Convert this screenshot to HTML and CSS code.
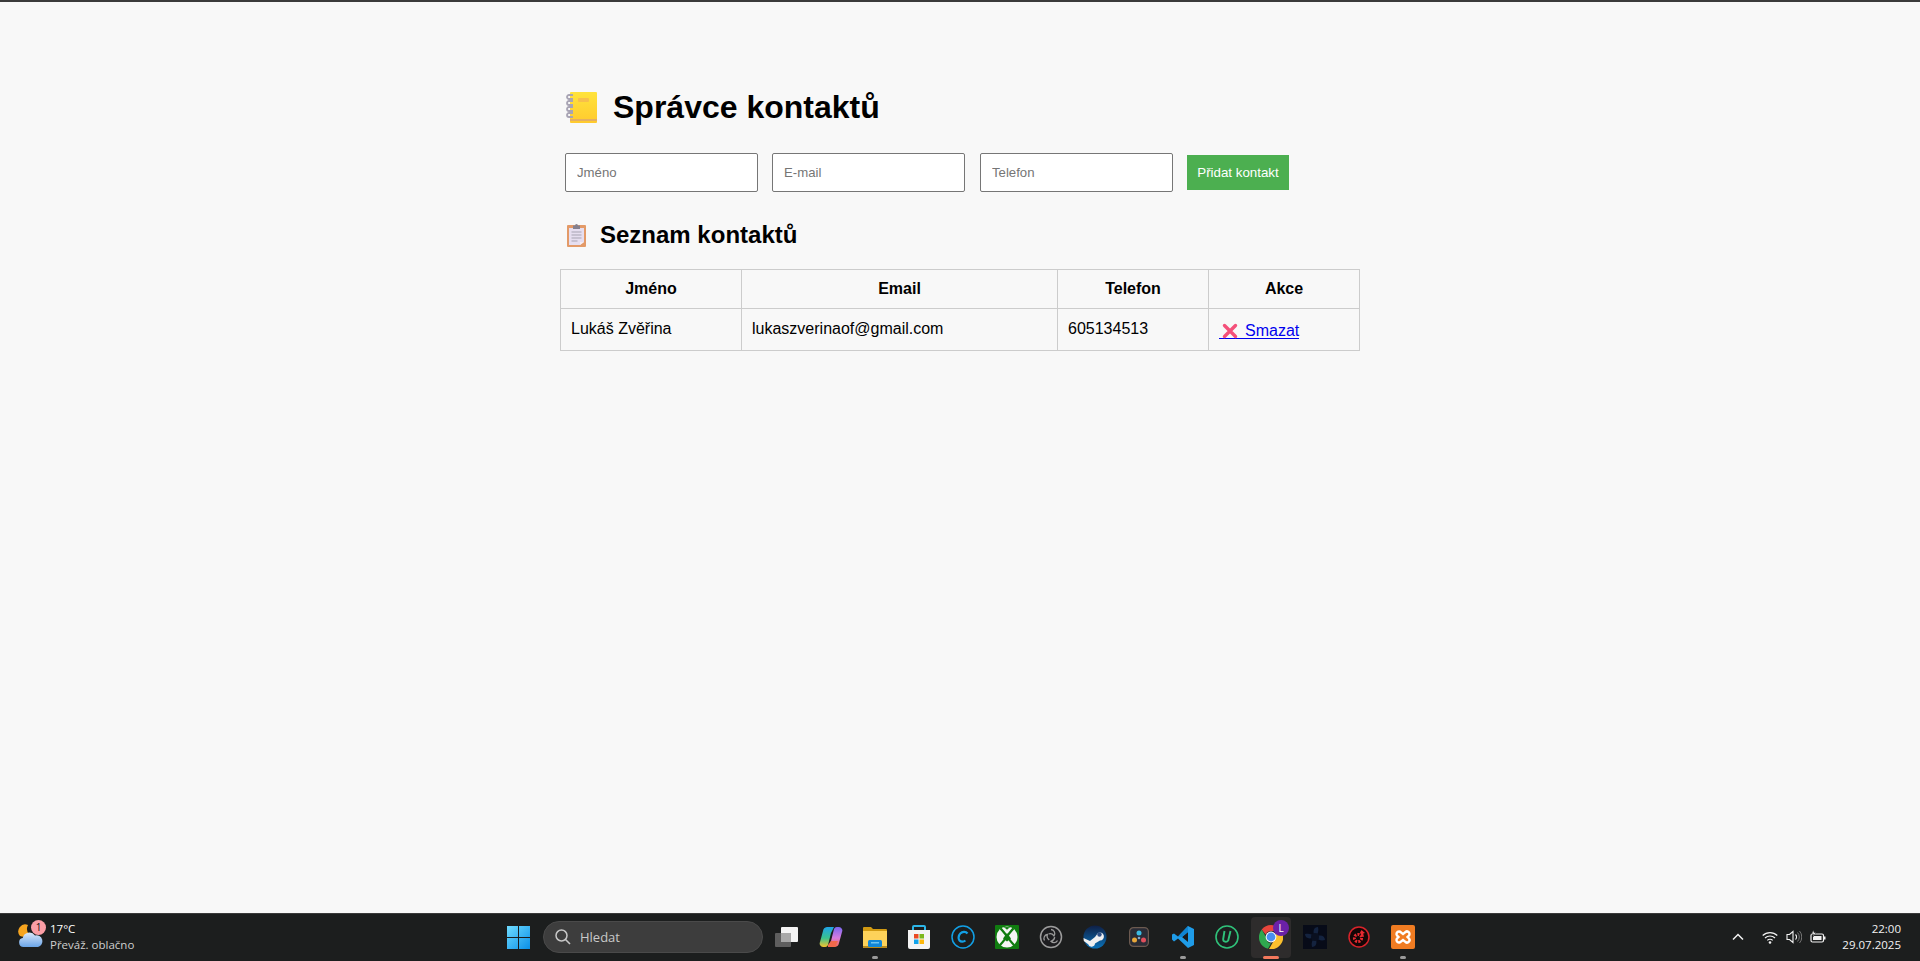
FILE: index.html
```html
<!DOCTYPE html>
<html lang="cs">
<head>
<meta charset="utf-8">
<title>Správce kontaktů</title>
<link rel="stylesheet" href="styles.css">
</head>
<body>
<div class="page">
  <main class="content">
    <h1 class="title">
      <svg class="emoji-book" viewBox="0 0 31 32" aria-hidden="true">
        <defs><linearGradient id="bookg" x1="0" y1="0" x2="0" y2="1"><stop offset="0" stop-color="#ffe33c"/><stop offset="1" stop-color="#ffca2e"/></linearGradient></defs>
        <rect x="4" y="0" width="27" height="31" rx="1" fill="url(#bookg)"/>
        <rect x="4" y="27" width="27" height="2" fill="#e4ae62"/>
        <rect x="12" y="6" width="11" height="4" rx="1" fill="#f7bf4c"/>
        <g fill="none" stroke="#a8a4b4" stroke-width="1.8"><path d="M7 3H3a2 2 0 0 0 0 4h4"/><path d="M7 9H3a2 2 0 0 0 0 4h4"/><path d="M7 15H3a2 2 0 0 0 0 4h4"/><path d="M7 21H3a2 2 0 0 0 0 4h4"/></g>
      </svg>
      <span>Správce kontaktů</span>
    </h1>
    <form class="add-form">
      <input class="field" type="text" placeholder="Jméno">
      <input class="field" type="text" placeholder="E-mail">
      <input class="field" type="text" placeholder="Telefon">
      <button class="add-btn" type="button">Přidat kontakt</button>
    </form>
    <h2 class="subtitle">
      <svg class="emoji-clip" viewBox="0 0 19 23" aria-hidden="true">
        <rect x="0" y="1" width="19" height="22" rx="1" fill="#e39a68"/>
        <path d="M2 4h15v14l-4 3H2z" fill="#e6def0"/>
        <path d="M13 21l4-3h-4z" fill="#f6eef4"/>
        <path d="M6 1.5h2a1.5 1.5 0 0 1 3 0h2V5H6z" fill="#85808e"/>
        <path d="M4.500 8h10M4.500 11h10M4.500 14h10M4.500 17h6" stroke="#a7a3b2" stroke-width="1"/>
      </svg>
      <span>Seznam kontaktů</span>
    </h2>
    <table class="contacts">
      <colgroup><col class="c1"><col class="c2"><col class="c3"><col class="c4"></colgroup>
      <thead>
        <tr><th>Jméno</th><th>Email</th><th>Telefon</th><th>Akce</th></tr>
      </thead>
      <tbody>
        <tr>
          <td>Lukáš Zvěřina</td>
          <td>lukaszverinaof@gmail.com</td>
          <td>605134513</td>
          <td class="action"><a class="del" href="#"><svg class="emoji-x" viewBox="0 0 16 16" aria-hidden="true"><path d="M2.500 2.500l11 11M13.500 2.500l-11 11" stroke="#f4507a" stroke-width="3.400" stroke-linecap="round"/></svg>Smazat</a></td>
        </tr>
      </tbody>
    </table>
  </main>

  <footer class="taskbar">
    <div class="tb-left">
      <div class="weather-icon">
        <svg viewBox="0 0 28 30" width="28" height="30" aria-hidden="true">
          <defs><linearGradient id="cloudg" x1="0" y1="0" x2="0" y2="1"><stop offset="0" stop-color="#dbe8fa"/><stop offset="1" stop-color="#6aa5e8"/></linearGradient></defs>
          <path d="M11 3a7 7 0 0 0-8 11 8 8 0 0 0 9-2 8 8 0 0 1-1-9z" fill="#f7a51f"/>
          <path d="M6.500 25a4.500 4.500 0 0 1-.8-8.900A6.800 6.800 0 0 1 18 13.500a5.800 5.800 0 0 1 3 11.500z" fill="url(#cloudg)"/>
        </svg>
        <span class="badge">1</span>
      </div>
      <div class="weather-text">
        <span class="temp">17°C</span>
        <span class="cond">Převáž. oblačno</span>
      </div>
    </div>

    <div class="tb-center">
      <div class="tb-start">
        <svg viewBox="0 0 23 23" width="23" height="23" aria-hidden="true">
          <defs><linearGradient id="wing" x1="0" y1="0" x2="1" y2="1"><stop offset="0" stop-color="#6fdcff"/><stop offset="1" stop-color="#0a8fe8"/></linearGradient></defs>
          <path d="M0 0h11v11H0zM12 0h11v11H12zM0 12h11v11H0zM12 12h11v11H12z" fill="url(#wing)"/>
        </svg>
      </div>
      <div class="tb-search">
        <svg viewBox="0 0 16 16" width="16" height="16" aria-hidden="true"><circle cx="6.500" cy="6.500" r="5.500" fill="none" stroke="#c8c8c8" stroke-width="1.500"/><path d="M10.500 10.500l4.500 4.500" stroke="#c8c8c8" stroke-width="1.600"/></svg>
        <span>Hledat</span>
      </div>
      <div class="tb-icon">
        <svg viewBox="0 0 24 24" width="24" height="24" aria-hidden="true"><rect x="0" y="8" width="16" height="14" rx="1" fill="#5e5e5e"/><rect x="6" y="2" width="17" height="15" rx="1" fill="#f4f4f4"/><rect x="6" y="8" width="10" height="9" fill="#a8a8a8"/></svg>
      </div>
      <div class="tb-icon">
        <svg viewBox="0 0 24 24" width="24" height="24" aria-hidden="true">
          <defs><linearGradient id="cop1" x1="0" y1="0" x2="0" y2="1"><stop offset="0" stop-color="#1fa4e8"/><stop offset=".55" stop-color="#39c28f"/><stop offset="1" stop-color="#f5c22c"/></linearGradient><linearGradient id="cop2" x1="0" y1="0" x2="0" y2="1"><stop offset="0" stop-color="#7a68f0"/><stop offset=".55" stop-color="#d77ce0"/><stop offset="1" stop-color="#f3684c"/></linearGradient></defs>
          <path d="M8 2h7l-3 6-3 12a3 3 0 0 1-3 2H4a3.500 3.500 0 0 1-3-5l3-11a4.500 4.500 0 0 1 4-4z" fill="url(#cop1)"/>
          <path d="M16 22H9l3-6 3-12a3 3 0 0 1 3-2h2a3.500 3.500 0 0 1 3 5l-3 11a4.500 4.500 0 0 1-4 4z" fill="url(#cop2)"/>
          <path d="M9 20l3-4h7l-3 6H9z" fill="#f0694a"/>
        </svg>
      </div>
      <div class="tb-icon open">
        <svg viewBox="0 0 24 22" width="24" height="22" aria-hidden="true"><path d="M0 2a1 1 0 0 1 1-1h7l2 2h13a1 1 0 0 1 1 1v4H0z" fill="#d19a12"/><path d="M0 5h24v16a1 1 0 0 1-1 1H1a1 1 0 0 1-1-1z" fill="#fdd25a"/><path d="M0 20h24v1a1 1 0 0 1-1 1H1a1 1 0 0 1-1-1z" fill="#b98a1a"/><rect x="5" y="14" width="14" height="7" rx="1.500" fill="#1187d8"/><rect x="8" y="16" width="8" height="1.500" fill="#6cc4f2"/></svg>
      </div>
      <div class="tb-icon">
        <svg viewBox="0 0 24 26" width="24" height="26" aria-hidden="true"><path d="M6 7V3a1 1 0 0 1 1-1h10a1 1 0 0 1 1 1v4" fill="none" stroke="#2cb6e8" stroke-width="2"/><path d="M1 6h22v17a2 2 0 0 1-2 2H3a2 2 0 0 1-2-2z" fill="#f4f4f4"/><rect x="7" y="10" width="4.500" height="4.500" fill="#ea4a24"/><rect x="12.500" y="10" width="4.500" height="4.500" fill="#7cb81c"/><rect x="7" y="15.500" width="4.500" height="4.500" fill="#12a4ec"/><rect x="12.500" y="15.500" width="4.500" height="4.500" fill="#fdb80c"/></svg>
      </div>
      <div class="tb-icon">
        <svg viewBox="0 0 24 24" width="24" height="24" aria-hidden="true"><circle cx="12" cy="12" r="11" fill="none" stroke="#12a0e6" stroke-width="1.500"/><path d="M16.500 8.500c-1-1.300-2.300-1.800-3.600-1.700-2.800.2-5 2.700-5.300 5.500-.3 2.600 1.400 4.500 3.800 4.400 1.100 0 2.100-.4 3-1.200" fill="none" stroke="#12a0e6" stroke-width="2.200"/></svg>
      </div>
      <div class="tb-icon">
        <svg viewBox="0 0 24 24" width="24" height="24" aria-hidden="true"><rect width="24" height="24" rx="1" fill="#107c10"/><circle cx="12" cy="12" r="10.500" fill="#f5f5f5"/><path d="M5.500 3.500C9 6 15 17 19.500 20.500M18.500 3.500C15 6 9 17 4.500 20.500" fill="none" stroke="#107c10" stroke-width="2.200"/><path d="M12 8l4 5.500-4 3-4-3z" fill="#107c10"/><path d="M8 2.500q4 1 4 3 0-2 4-3-4-1-8 0z" fill="#107c10"/></svg>
      </div>
      <div class="tb-icon">
        <svg viewBox="0 0 24 24" width="24" height="24" aria-hidden="true"><circle cx="12" cy="12" r="10.500" fill="#1d1d20" stroke="#9c9c9c" stroke-width="1.500"/><g fill="none" stroke="#9a9a9a" stroke-width="1.300"><path d="M12 4.500a4 4 0 0 1 3 6.300 5 5 0 0 0-5.500-1.800"/><path d="M18.500 15.500a4 4 0 0 1-6.500.8 5 5 0 0 0 3.700-4.200"/><path d="M5.500 15.500a4 4 0 0 1 2.800-6 5 5 0 0 0 2 5.400"/></g></svg>
      </div>
      <div class="tb-icon">
        <svg viewBox="0 0 24 24" width="24" height="24" aria-hidden="true"><defs><linearGradient id="steamg" x1="0" y1="0" x2="0" y2="1"><stop offset="0" stop-color="#0f1f45"/><stop offset="1" stop-color="#0a72b8"/></linearGradient></defs><circle cx="12" cy="12" r="11.500" fill="url(#steamg)"/><path d="M.5 13l6.500 3 5-4 3-4a4 4 0 1 1 2 7.500l-5 3a3.500 3.500 0 0 1-6.800.8L.8 16z" fill="#f0f0f0"/><circle cx="16.500" cy="9.500" r="2.200" fill="#2d4f86"/></svg>
      </div>
      <div class="tb-icon">
        <svg viewBox="0 0 20 20" width="20" height="20" aria-hidden="true"><rect x=".6" y=".6" width="18.800" height="18.800" rx="4" fill="#2a2c36" stroke="#6c5a50" stroke-width="1.200"/><circle cx="10" cy="6" r="2.500" fill="#3cbbe4"/><circle cx="5.500" cy="13" r="2.500" fill="#e8a73a"/><circle cx="14.500" cy="13" r="2.500" fill="#e04f5c"/><circle cx="10" cy="11" r="1.300" fill="#7ca8d0"/></svg>
      </div>
      <div class="tb-icon open">
        <svg viewBox="0 0 24 24" width="24" height="24" aria-hidden="true"><path d="M17 1l6 3v16l-6 3-10-9.500-4 3L1 14.500V9.500l2-1 4 3z" fill="#1f9ce8"/><path d="M17 7v10l-6-5z" fill="#1a1a1a"/><path d="M17 1v6l-6 5-4-.500z" fill="#0f84d2"/></svg>
      </div>
      <div class="tb-icon">
        <svg viewBox="0 0 24 24" width="24" height="24" aria-hidden="true"><circle cx="12" cy="12" r="11" fill="none" stroke="#2fc27a" stroke-width="1.600"/><path d="M9.500 6l-1.300 8c-.4 3 3.500 3.600 5 1.500L15.500 6" fill="none" stroke="#2fc27a" stroke-width="1.900"/></svg>
      </div>
      <div class="tb-icon active">
        <span class="active-bg"></span>
        <svg viewBox="0 0 24 24" width="24" height="24" aria-hidden="true"><path d="M12 0a12 12 0 0 1 10.400 6H12a6 6 0 0 0-5.500 3.600L2.700 4.500A12 12 0 0 1 12 0z" fill="#e8453c"/><path d="M2.700 4.500l5 8.800a5 5 0 0 0 4.300 5l-3 5.500A12 12 0 0 1 2.700 4.500z" fill="#2fa84f"/><path d="M22.400 6A12 12 0 0 1 10 24l5-8.500a6 6 0 0 0 1.500-6.500z" fill="#fbc02d"/><circle cx="12" cy="12" r="5.400" fill="#fff"/><circle cx="12" cy="12" r="4.400" fill="#4a8ff0"/></svg>
        <span class="profile">L</span>
      </div>
      <div class="tb-icon">
        <svg viewBox="0 0 24 24" width="24" height="24" aria-hidden="true"><rect width="24" height="24" fill="#070b18"/><g fill="#14233f"><path d="M12 12C9 6 11 2 15 2c1 4 0 7-3 10zM12 12c6-3 10-1 10 3-4 1-7 0-10-3zM12 12c3 6 1 10-3 10-1-4 0-7 3-10zM12 12C6 15 2 13 2 9c4-1 7 0 10 3z"/></g><circle cx="12" cy="12" r="4" fill="#0a1020"/></svg>
      </div>
      <div class="tb-icon">
        <svg viewBox="0 0 22 22" width="22" height="22" aria-hidden="true"><circle cx="11" cy="11" r="10" fill="#140606" stroke="#d8232a" stroke-width="1.500"/><circle cx="10" cy="12" r="3.600" fill="none" stroke="#e62a30" stroke-width="3" stroke-dasharray="2 1.200"/><path d="M13.500 4l3.500 3-1.800.5.800 3.500-2.500-1-1.500-3.500z" fill="#e62a30"/></svg>
      </div>
      <div class="tb-icon open">
        <svg viewBox="0 0 24 24" width="24" height="24" aria-hidden="true"><rect width="24" height="24" rx="2" fill="#f07c22"/><path d="M8 6.500a2.500 2.500 0 0 0-2 4l1.500 1.500L6 13.500a2.500 2.500 0 1 0 4 3L12 15l2 1.500a2.500 2.500 0 1 0 4-3L16.500 12l1.500-1.500a2.500 2.500 0 1 0-4-3L12 9l-2-1.500a2.500 2.500 0 0 0-2-1z" fill="none" stroke="#fff" stroke-width="2.400"/></svg>
      </div>
    </div>

    <div class="tb-right">
      <svg class="tray chev" viewBox="0 0 12 8" width="12" height="8" aria-hidden="true"><path d="M1 6.500l5-5 5 5" fill="none" stroke="#f2f2f2" stroke-width="1.500"/></svg>
      <svg class="tray" viewBox="0 0 16 13" width="16" height="13" aria-hidden="true"><g fill="none" stroke="#f2f2f2" stroke-width="1.200"><path d="M.7 4.500a10.500 10.500 0 0 1 14.600 0"/><path d="M3 7a7.200 7.200 0 0 1 10 0"/><path d="M5.300 9.400a3.800 3.800 0 0 1 5.400 0"/></g><circle cx="8" cy="11.500" r="1.300" fill="#f2f2f2"/></svg>
      <svg class="tray" viewBox="0 0 16 14" width="16" height="14" aria-hidden="true"><path d="M1 4.500h2.500L7 1.500v11l-3.500-3H1z" fill="none" stroke="#f2f2f2" stroke-width="1.100"/><path d="M9.500 4.500a3.500 3.500 0 0 1 0 5" fill="none" stroke="#f2f2f2" stroke-width="1.100"/><path d="M11.500 2.500a6.500 6.500 0 0 1 0 9M13.500 1a9 9 0 0 1 0 12" fill="none" stroke="#777" stroke-width="1"/></svg>
      <svg class="tray batt" viewBox="0 0 16 14" width="16" height="14" aria-hidden="true"><rect x="1" y="4" width="12.500" height="8" rx="1.500" fill="none" stroke="#f2f2f2" stroke-width="1.200"/><rect x="3" y="6" width="8.500" height="4" fill="#f2f2f2"/><rect x="14" y="6.500" width="1.500" height="3" fill="#f2f2f2"/><path d="M3.500 0L1.500 4h2L3 7l3-4.500H4z" fill="#f2f2f2" stroke="#1c1c1c" stroke-width=".5"/></svg>
      <div class="clock"><span>22:00</span><span>29.07.2025</span></div>
    </div>
  </footer>
</div>
</body>
</html>
```

FILE: styles.css
```css
* { box-sizing: border-box; }
html, body { margin: 0; height: 100%; }
body {
  background: #f8f8f8;
  color: #000;
  font-family: "Liberation Sans", Arial, sans-serif;
  overflow: hidden;
}
.page {
  height: 961px;
  display: flex;
  flex-direction: column;
  border-top: 2px solid #3b3b3b;
}
.content {
  flex: 1;
  width: 800px;
  margin: 0 auto;
}
.title {
  display: flex;
  align-items: center;
  margin: 87px 0 0 6px;
  height: 37px;
  font-size: 32px;
  line-height: 37px;
  font-weight: bold;
}
.emoji-book { width: 31px; height: 32px; margin-right: 16px; flex: none; }
.add-form {
  display: flex;
  align-items: center;
  margin: 27px 0 0 5px;
}
.field {
  width: 193px;
  height: 39px;
  padding: 11px;
  margin-right: 14px;
  background: #fff;
  border: 1px solid #767676;
  border-radius: 2px;
  font: 13.2px "Liberation Sans", Arial, sans-serif;
}
.field::placeholder { color: #757575; }
.add-form .field:nth-child(2) { margin-right: 15px; }
.add-btn {
  width: 102px;
  height: 35px;
  padding: 0;
  border: 0;
  background: #4caf50;
  color: #fff;
  font: 13.333px "Liberation Sans", Arial, sans-serif;
}
.subtitle {
  display: flex;
  align-items: center;
  margin: 29px 0 0 7px;
  height: 28px;
  font-size: 24px;
  line-height: 28px;
  font-weight: bold;
}
.emoji-clip { width: 19px; height: 23px; margin-right: 14px; flex: none; }
.contacts {
  width: 800px;
  margin-top: 20px;
  border-collapse: collapse;
  table-layout: fixed;
  font-size: 16px;
}
.c1 { width: 181px; }
.c2 { width: 316px; }
.c3 { width: 151px; }
.c4 { width: 151px; }
.contacts th, .contacts td {
  border: 1px solid #ccc;
  padding: 10px;
  line-height: 18px;
}
.contacts td { height: 42px; vertical-align: top; padding-top: 11px; padding-bottom: 9px; }
.contacts td.action { padding-top: 14px; padding-bottom: 0; }
.del {
  display: flex;
  width: fit-content;
  height: 16px;
  line-height: 16px;
  color: #0000ee;
  text-decoration: none;
  border-bottom: 1px solid #0000ee;
  white-space: nowrap;
}
.emoji-x { width: 16px; height: 16px; margin: 0 7px 0 3px; flex: none; }

.taskbar {
  height: 48px;
  flex: none;
  display: grid;
  grid-template-columns: 496px auto 1fr;
  align-items: center;
  padding-bottom: 1px;
  background: #1c1e1e;
  border-top: 1px solid #3a3a3a;
  color: #fff;
  font-family: "Open Sans", "Noto Sans", sans-serif;
  font-size: 11.500px;
}
.tb-left { display: flex; align-items: center; padding-left: 17px; }
.weather-icon { position: relative; width: 28px; height: 30px; margin-right: 5px; }
.badge {
  position: absolute;
  right: -1px;
  top: -2px;
  width: 15px;
  height: 15px;
  border-radius: 50%;
  background: #fb9ea6;
  color: #111;
  font-size: 10px;
  line-height: 15px;
  text-align: center;
}
.weather-text { display: flex; flex-direction: column; line-height: 16px; }
.cond { color: #cfcfcf; }
.tb-center { display: flex; align-items: center; height: 46px; }
.tb-start { width: 45px; height: 46px; display: flex; align-items: center; justify-content: center; }
.tb-search {
  width: 220px;
  height: 32px;
  margin: 0 2px;
  display: flex;
  align-items: center;
  gap: 9px;
  padding-left: 11px;
  border-radius: 16px;
  background: #3d3d3d;
  border: 1px solid #4a4a4a;
  color: #c9c9c9;
  font-size: 13px;
}
.tb-icon {
  position: relative;
  width: 44px;
  height: 46px;
  display: flex;
  align-items: center;
  justify-content: center;
}
.tb-icon svg { position: relative; }
.tb-icon.open::after, .tb-icon.active::after {
  content: "";
  position: absolute;
  left: 50%;
  bottom: 1px;
  width: 6px;
  height: 3px;
  margin-left: -3px;
  border-radius: 2px;
  background: #9a9a9a;
}
.tb-icon.active::after { width: 16px; margin-left: -8px; background: #f2785c; }
.active-bg {
  position: absolute;
  left: 2px;
  right: 2px;
  top: 3px;
  bottom: 2px;
  border-radius: 4px;
  background: #2e2c2c;
}
.profile {
  position: absolute;
  right: 4px;
  top: 6px;
  width: 16px;
  height: 16px;
  border-radius: 50%;
  background: #6b21a8;
  color: #fff;
  font-size: 10px;
  line-height: 16px;
  text-align: center;
}
.tb-right { display: flex; align-items: center; justify-content: flex-end; padding-right: 19px; }
.tray { margin-right: 8px; }
.chev { margin-right: 18px; }
.batt { margin-right: 16px; }
.clock { display: flex; flex-direction: column; align-items: flex-end; line-height: 16px; color: #f2f2f2; }
```
